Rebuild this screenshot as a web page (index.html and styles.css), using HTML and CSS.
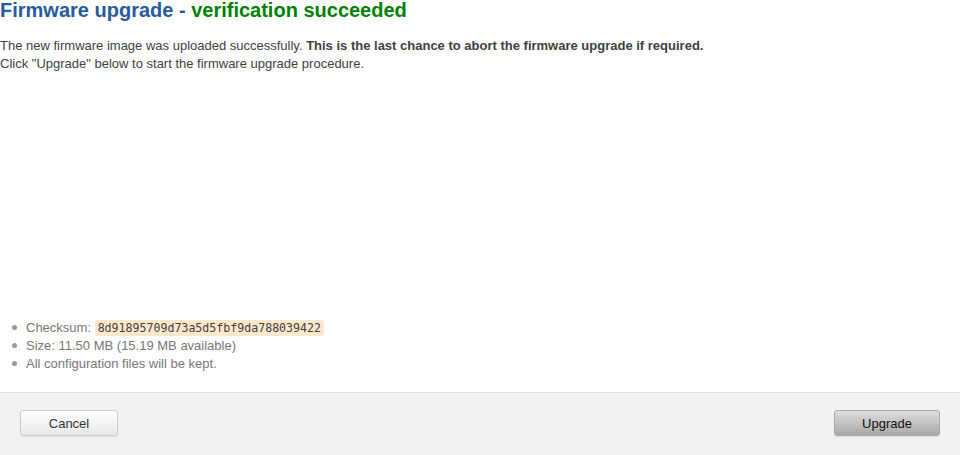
FILE: index.html
```html
<!DOCTYPE html>
<html lang="en">
<head>
    <meta charset="UTF-8">
    <meta name="viewport" content="width=device-width, initial-scale=1.0">
    <title>Firmware upgrade</title>
    <link rel="stylesheet" href="styles.css">
</head>
<body>
    <div class="modal">
        <div class="modal-body">
            <div class="intro">
                <h2>Firmware upgrade - <span class="ok">verification succeeded</span></h2>
                <p>The new firmware image was uploaded successfully. <strong>This is the last chance to abort the firmware upgrade if required.</strong><br>
                Click "Upgrade" below to start the firmware upgrade procedure.</p>
            </div>
            <ul class="details">
                <li>Checksum: <code>8d91895709d73a5d5fbf9da788039422</code></li>
                <li>Size: 11.50 MB (15.19 MB available)</li>
                <li>All configuration files will be kept.</li>
            </ul>
        </div>
        <div class="modal-footer">
            <button class="btn">Cancel</button>
            <button class="btn btn-primary">Upgrade</button>
        </div>
    </div>
</body>
</html>
```

FILE: styles.css
```css
* {
    box-sizing: border-box;
    margin: 0;
    padding: 0;
}
body {
    font-family: 'Liberation Sans', Arial, sans-serif;
    font-size: 13px;
    color: #404040;
    background: #fff;
}
.modal {
    display: flex;
    flex-direction: column;
    height: 455px;
}
.modal-body {
    flex: 1;
    display: flex;
    flex-direction: column;
    justify-content: space-between;
    padding-bottom: 19px;
}
h2 {
    font-size: 20px;
    line-height: 20px;
    color: #2a5a9e;
    margin-bottom: 17px;
}
h2 .ok {
    color: #008000;
}
p {
    line-height: 18px;
}
.details {
    list-style: none;
    color: #777;
    line-height: 18px;
    padding-left: 12px;
}
.details li::before {
    content: '';
    display: inline-block;
    width: 5px;
    height: 5px;
    border-radius: 50%;
    background: #999;
    margin-right: 9px;
    vertical-align: 2px;
}
code {
    font-family: 'DejaVu Sans Mono', monospace;
    font-size: 11.6px;
    color: #404040;
    background: #fde8cc;
    padding: 1px 3px;
    border-radius: 3px;
}
.modal-footer {
    border-top: 1px solid #ddd;
    background: #f2f2f2;
    height: 63px;
    padding: 17px 20px 0;
    display: flex;
    justify-content: space-between;
    align-items: flex-start;
}
.btn {
    font-family: 'Liberation Sans', Arial, sans-serif;
    font-size: 13px;
    color: #333;
    height: 26px;
    width: 98px;
    border: 1px solid #ccc;
    border-radius: 3px;
    background: linear-gradient(#fff, #e8e8e8);
    box-shadow: 0 1px 1px rgba(0,0,0,0.08);
    cursor: pointer;
}
.btn-primary {
    width: 106px;
    color: #111;
    border-color: #aaa;
    background: linear-gradient(#ddd, #a8a8a8);
}
```
